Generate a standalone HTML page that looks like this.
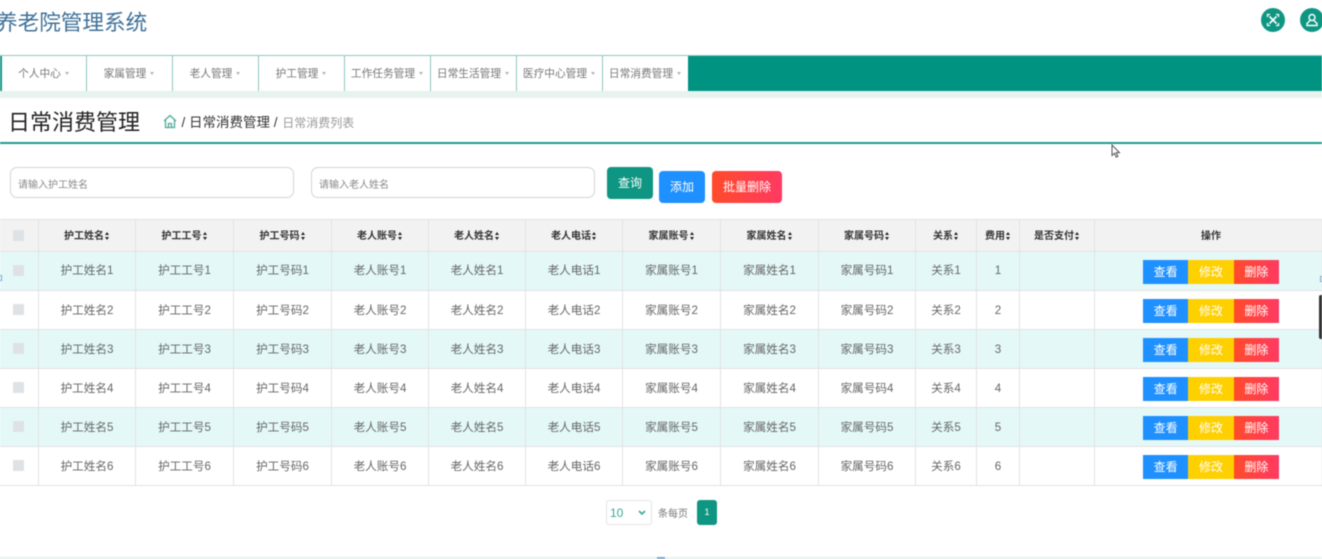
<!DOCTYPE html>
<html lang="zh">
<head>
<meta charset="utf-8">
<title>养老院管理系统</title>
<style>
*{box-sizing:border-box}
html,body{margin:0;padding:0;width:1322px;height:559px;overflow:hidden;background:#fff}
body{position:relative;font-family:"Liberation Sans","Noto Sans CJK SC",sans-serif;color:#666}
#wrap{position:absolute;left:0;top:0;width:1322px;height:559px;filter:blur(.5px)}
.a{position:absolute}
.title{left:-4px;top:9px;font-size:21.600px;line-height:28px;color:#3f7199;white-space:nowrap}
.circle{width:24px;height:24px;border-radius:50%;background:#0f9683;top:8px}
.circle svg{position:absolute;left:5px;top:5px}
.nav{left:0;top:55px;width:1322px;height:36px;background:#009382;border-top:1px solid #8cc9c1}
.tab{position:absolute;top:0;height:35px;width:86px;background:#fff;border-right:1px solid #8cc9c1;font-size:10.700px;line-height:36px;color:#777;text-align:center;white-space:nowrap;padding-right:1px}
.tab i{display:inline-block;border:2.500px solid transparent;border-top:3px solid #b5b5b5;border-bottom:0;margin-left:4px;vertical-align:2px}
.strip{left:0;top:91px;width:1322px;height:7px;background:#e6f3ef}
.h1{left:8px;top:108px;font-size:22px;line-height:30px;color:#222;white-space:nowrap}
.crumb{left:181.500px;top:114px;font-size:13.500px;line-height:18px;color:#333;white-space:nowrap}
.crumb span{font-size:12px;color:#999;margin-left:1px}
.rule{left:0;top:142px;width:1322px;height:2px;background:#1d9c8c}
.inp{top:167px;height:31px;border:1.500px solid #d4d4d4;border-radius:7px;background:#fff;font-size:10px;line-height:35px;color:#8a8a8a;padding-left:7px}
.btn{border-radius:4px;color:#fff;text-align:center;font-size:12px}
table{position:absolute;left:0;top:219px;width:1322px;border-collapse:collapse;table-layout:fixed;font-size:11.600px}
th{height:32px;background:#f2f2f2;border:1px solid #e2e2e2;border-left:0;font-size:10px;line-height:12px;color:#333;font-weight:bold;padding:2px 0 0 1px;white-space:nowrap}
td{height:39px;border:1px solid #e2e2e2;border-left:0;text-align:center;padding:0 0 0 1px;color:#666;white-space:nowrap}
tr.r1 td{padding-bottom:2px}
tr.g td{background:#e4f8f8}
th b{display:inline-block;position:relative;width:5px;height:8px;margin-left:1px;vertical-align:-1px}
th b::before,th b::after{content:"";position:absolute;left:0;border:2.500px solid transparent}
th b::before{top:0;border-top:0;border-bottom:3.500px solid #222}
th b::after{bottom:0;border-bottom:0;border-top:3.500px solid #222}
.cb{display:block;position:relative;top:-1px;width:11px;height:11px;background:#dfe2e5;margin:0 0 0 12px}
tr.r1 .cb{top:0}
.ops{position:relative;left:2.500px;display:flex;width:136px;height:24px;margin:1px auto 0;font-size:12px;color:#fff;line-height:24px}
tr.r1 .ops{top:1px}
.ops span{flex:1;text-align:center}
.v{background:#1f90ff}.e{background:#ffd000}.d{background:linear-gradient(90deg,#ff4b2b,#ff3a62)}
.sel{left:606px;top:500px;width:46px;height:25px;border:1px solid #e3e3e3;border-radius:3px;font-size:12px;line-height:24px;color:#3aa898;padding-left:3px}
.sel svg{position:absolute;right:5px;top:9px}
.per{left:658px;top:508px;font-size:10px;line-height:14px;color:#777}
.pg{left:697px;top:500px;width:20px;height:25px;border-radius:3px;background:#0f9683;color:#fff;font-size:9px;line-height:25px;text-align:center}
.foot{left:0;top:557px;width:1322px;height:2px;background:#e6f3ef}
</style>
</head>
<body>
<div id="wrap">
<div class="a title">养老院管理系统</div>
<div class="a circle" style="left:1261px"><svg width="14" height="14" viewBox="0 0 14 14" fill="none" stroke="#fff" stroke-width="1.600"><path d="M3.500 3.500l7 7M10.500 3.500l-7 7"/><path d="M1.500 4V1.500H4M10 1.500h2.500V4M12.500 10v2.500H10M4 12.500H1.500V10" stroke-width="1.300"/></svg></div>
<div class="a circle" style="left:1300px"><svg width="14" height="14" viewBox="0 0 14 14" fill="none" stroke="#fff" stroke-width="1.400"><circle cx="7" cy="4.500" r="3"/><path d="M5 7.500L2 10.500v2h10v-2L9 7.500"/></svg></div>

<div class="a nav">
<div class="tab" style="left:0;width:87px;border-left:2px solid #0f9683">个人中心<i></i></div>
<div class="tab" style="left:87px">家属管理<i></i></div>
<div class="tab" style="left:173px">老人管理<i></i></div>
<div class="tab" style="left:259px">护工管理<i></i></div>
<div class="tab" style="left:345px">工作任务管理<i></i></div>
<div class="tab" style="left:431px">日常生活管理<i></i></div>
<div class="tab" style="left:517px">医疗中心管理<i></i></div>
<div class="tab" style="left:603px;border-right:0;width:85px">日常消费管理<i></i></div>
</div>
<div class="a strip"></div>

<div class="a h1">日常消费管理</div>
<svg class="a" style="left:163px;top:114px" width="14" height="15" viewBox="0 0 14 15" fill="none" stroke="#4fa99b" stroke-width="1.300"><path d="M1 7L7 1.500 13 7M2.500 6v7.500h9V6M5.500 13.500V9.500h3v4"/></svg>
<div class="a crumb">/ 日常消费管理 / <span>日常消费列表</span></div>
<div class="a rule"></div>

<div class="a inp" style="left:10px;width:284px">请输入护工姓名</div>
<div class="a inp" style="left:311px;width:284px">请输入老人姓名</div>
<div class="a btn" style="left:607px;top:167px;width:46px;height:32px;line-height:32px;background:#0f9683">查询</div>
<div class="a btn" style="left:659px;top:171px;width:46px;height:32px;line-height:32px;background:#1f90ff">添加</div>
<div class="a btn" style="left:712px;top:171px;width:70px;height:32px;line-height:32px;background:linear-gradient(90deg,#ff4b2b,#ff3a62)">批量删除</div>

<table>
<colgroup><col style="width:38px"><col style="width:97px"><col style="width:98px"><col style="width:98px"><col style="width:97px"><col style="width:97px"><col style="width:97px"><col style="width:98px"><col style="width:98px"><col style="width:97px"><col style="width:61px"><col style="width:43px"><col style="width:75px"><col style="width:228px"></colgroup>
<tr><th><span class="cb"></span></th><th>护工姓名<b></b></th><th>护工工号<b></b></th><th>护工号码<b></b></th><th>老人账号<b></b></th><th>老人姓名<b></b></th><th>老人电话<b></b></th><th>家属账号<b></b></th><th>家属姓名<b></b></th><th>家属号码<b></b></th><th>关系<b></b></th><th>费用<b></b></th><th>是否支付<b></b></th><th style="padding-left:6px">操作</th></tr>
<tr class="g r1"><td><span class="cb"></span></td><td>护工姓名1</td><td>护工工号1</td><td>护工号码1</td><td>老人账号1</td><td>老人姓名1</td><td>老人电话1</td><td>家属账号1</td><td>家属姓名1</td><td>家属号码1</td><td>关系1</td><td>1</td><td></td><td><div class="ops"><span class="v">查看</span><span class="e">修改</span><span class="d">删除</span></div></td></tr>
<tr><td><span class="cb"></span></td><td>护工姓名2</td><td>护工工号2</td><td>护工号码2</td><td>老人账号2</td><td>老人姓名2</td><td>老人电话2</td><td>家属账号2</td><td>家属姓名2</td><td>家属号码2</td><td>关系2</td><td>2</td><td></td><td><div class="ops"><span class="v">查看</span><span class="e">修改</span><span class="d">删除</span></div></td></tr>
<tr class="g"><td><span class="cb"></span></td><td>护工姓名3</td><td>护工工号3</td><td>护工号码3</td><td>老人账号3</td><td>老人姓名3</td><td>老人电话3</td><td>家属账号3</td><td>家属姓名3</td><td>家属号码3</td><td>关系3</td><td>3</td><td></td><td><div class="ops"><span class="v">查看</span><span class="e">修改</span><span class="d">删除</span></div></td></tr>
<tr><td><span class="cb"></span></td><td>护工姓名4</td><td>护工工号4</td><td>护工号码4</td><td>老人账号4</td><td>老人姓名4</td><td>老人电话4</td><td>家属账号4</td><td>家属姓名4</td><td>家属号码4</td><td>关系4</td><td>4</td><td></td><td><div class="ops"><span class="v">查看</span><span class="e">修改</span><span class="d">删除</span></div></td></tr>
<tr class="g"><td><span class="cb"></span></td><td>护工姓名5</td><td>护工工号5</td><td>护工号码5</td><td>老人账号5</td><td>老人姓名5</td><td>老人电话5</td><td>家属账号5</td><td>家属姓名5</td><td>家属号码5</td><td>关系5</td><td>5</td><td></td><td><div class="ops"><span class="v">查看</span><span class="e">修改</span><span class="d">删除</span></div></td></tr>
<tr><td><span class="cb"></span></td><td>护工姓名6</td><td>护工工号6</td><td>护工号码6</td><td>老人账号6</td><td>老人姓名6</td><td>老人电话6</td><td>家属账号6</td><td>家属姓名6</td><td>家属号码6</td><td>关系6</td><td>6</td><td></td><td><div class="ops"><span class="v">查看</span><span class="e">修改</span><span class="d">删除</span></div></td></tr>
</table>

<div class="a" style="left:1319px;top:295px;width:3px;height:44px;background:#333;border-radius:2px 0 0 2px"></div>
<div class="a" style="left:1320px;top:276px;width:2px;height:6px;border:1px solid #7fa6c9;border-right:0"></div>
<div class="a" style="left:0;top:275px;width:2px;height:6px;border:1px solid #7fa6c9;border-left:0"></div>
<svg class="a" style="left:1111px;top:144px" width="11" height="15" viewBox="0 0 11 15"><path d="M1 1v10.500l2.500-2.300 1.700 4 1.700-.8-1.700-3.800h3.300z" fill="#fff" stroke="#555" stroke-width="1"/></svg>

<div class="a sel">10<svg width="8" height="6" viewBox="0 0 8 6" fill="none" stroke="#3aa898" stroke-width="1.600"><path d="M1 1l3 3 3-3"/></svg></div>
<div class="a per">条每页</div>
<div class="a pg">1</div>
<div class="a foot"></div>
<div class="a" style="left:657px;top:557px;width:8px;height:2px;background:#7fa6c9"></div>
</div>
</body>
</html>
